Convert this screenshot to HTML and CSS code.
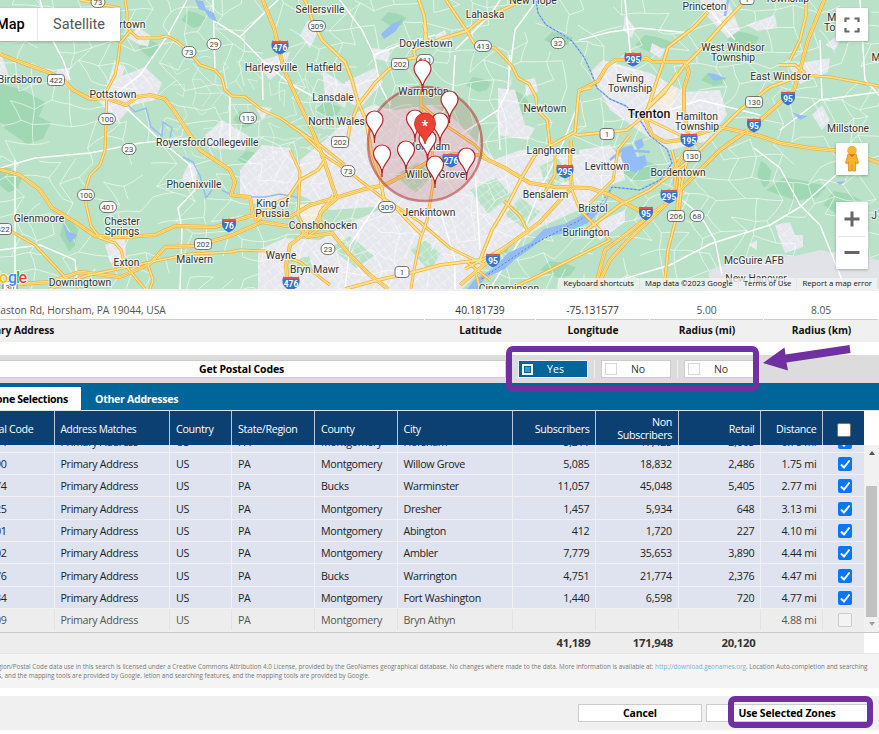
FILE: index.html
```html
<!DOCTYPE html>
<html lang="en">
<head>
<meta charset="utf-8">
<title>Zone Selections</title>
<link rel="stylesheet" href="styles.css">
</head>
<body>
<div class="app">
  <section class="map">
    <svg class="map-canvas" id="map" viewBox="0 0 879 289" width="879" height="289"></svg>
    <div class="map-type"><b>Map</b><span>Satellite</span></div>
    <button class="ctl fullscreen" aria-label="Fullscreen"><svg width="16" height="16" viewBox="0 0 16 16"><path d="M1.500 5V1.500h4M10.500 1.500h4V5M14.500 11v3.500h-4M5.500 14.500h-4V11" fill="none" stroke="#666" stroke-width="2.200"/></svg></button>
    <button class="ctl pegman" aria-label="Street View"><svg width="18" height="28" viewBox="0 0 18 28"><path d="M5 9h8l2.500 9-2 .8-1-2V26H9.600v-6H8.400v6H5.500v-9.200l-1 2-2-.8z" fill="#f9b32a" stroke="#d98b1c" stroke-width=".8"/><circle cx="9" cy="5.500" r="4.300" fill="#fbb829" stroke="#d98b1c" stroke-width=".6"/><path d="M6 9.500h6l-3 2.500z" fill="#e3622c"/></svg></button>
    <div class="ctl zoom"><button aria-label="Zoom in"><svg width="16" height="16"><path d="M8 .5v15M.5 8h15" stroke="#666" stroke-width="3"/></svg></button><button aria-label="Zoom out"><svg width="16" height="16"><path d="M.5 7.500h15" stroke="#666" stroke-width="3"/></svg></button></div>
    <div class="legal"><span>Keyboard shortcuts</span><span>Map data ©2023 Google</span><span>Terms of Use</span><span>Report a map error</span></div>
  </section>

  <section class="location">
    <div class="field address"><span>100 Easton Rd, Horsham, PA 19044, USA</span><b>Primary Address</b></div>
    <div class="field"><span class="dark">40.181739</span><b>Latitude</b></div>
    <div class="field"><span class="dark">-75.131577</span><b>Longitude</b></div>
    <div class="field"><span>5.00</span><b>Radius (mi)</b></div>
    <div class="field"><span>8.05</span><b>Radius (km)</b></div>
  </section>

  <section class="toolbar">
    <button class="get">Get Postal Codes</button>
    <div class="toggles">
      <button class="toggle on"><i></i><span>Yes</span></button><em></em>
      <button class="toggle"><i></i><span>No</span></button><em></em>
      <button class="toggle"><i></i><span>No</span></button>
    </div>
  </section>

  <nav class="tabs"><div class="tab active">Zone Selections</div><div class="tab">Other Addresses</div></nav>

  <section class="grid">
    <div class="row head"><div>Postal Code</div><div class="tight">Address Matches</div><div>Country</div><div>State/Region</div><div>County</div><div>City</div><div class="n">Subscribers</div><div class="n">Non<br>Subscribers</div><div class="n">Retail</div><div class="n">Distance</div><div class="c"><i class="box"></i></div></div>
    <div class="body">
      <div class="rows" id="rows"></div>
      <div class="scroll"><i class="up"></i><i class="thumb"></i><i class="down"></i></div>
    </div>
    <div class="row total"><div></div><div></div><div></div><div></div><div></div><div></div><div class="n">41,189</div><div class="n">171,948</div><div class="n">20,120</div><div></div><div></div></div>
  </section>

  <footer class="notice"><p>Region/Postal Code data use in this search is licensed under a Creative Commons Attribution 4.0 License, provided by the GeoNames geographical database. No changes where made to the data. More information is available at: <a>http://download.geonames.org</a>. Location Auto-completion and searching</p><p>features, and the mapping tools are provided by Google. letion and searching features, and the mapping tools are provided by Google.</p></footer>
  <section class="actions"><button>Cancel</button><button class="use">Use Selected Zones</button></section>

  <div class="callout first"></div>
  <div class="callout second"></div>
  <svg class="arrow" width="92" height="30" viewBox="0 0 92 30"><path d="M3 18 24.500 2.500 25.500 9.500 89.500 0 90.500 8 26.500 17.500 28 25.500z" fill="#7030a0"/></svg>
</div>
<script src="app.js"></script>
</body>
</html>
```
FILE: styles.css
```css
* { box-sizing: border-box; }
body { margin: 0; background: #fff; font: 11px/14px "Open Sans", "Noto Sans", sans-serif; color: #222; }
button { font: inherit; padding: 0; border: 0; margin: 0; background: #fff; }
.app { position: relative; width: 879px; height: 734px; overflow: hidden; }

.map { position: relative; height: 291px; border-bottom: 2px solid #f0f0f0; overflow: hidden; }
.map-canvas { display: block; }
.map-canvas text { font-family: Roboto, sans-serif; }
.label { font-size: 10.3px; fill: #333; stroke: #fff; stroke-opacity: .7; stroke-width: 2px; paint-order: stroke; text-anchor: middle; }
.label.big { font-size: 12.3px; font-weight: 500; fill: #111; }
.shield { font-size: 7.800px; fill: #444; text-anchor: middle; }
.shield.inter { fill: #fff; font-weight: 700; font-size: 8.300px; }
.logo { font-size: 16px; font-weight: 500; paint-order: stroke; stroke: #fff; stroke-width: 1.500px; }
.map-type { position: absolute; left: -20px; top: 8px; height: 33px; display: flex; background: #fff; box-shadow: 0 1px 3px #0004; font: 14.5px/33px Roboto, sans-serif; }
.map-type b { width: 58px; padding-left: 16px; font-weight: 500; color: #000; border-right: 1px solid #e6e6e6; }
.map-type span { width: 82px; text-align: center; color: #565656; }
.ctl { position: absolute; left: 836px; width: 32px; background: #fff; border-radius: 1px; box-shadow: 0 1px 3px #0004; display: flex; align-items: center; justify-content: center; }
.fullscreen { top: 8px; height: 33px; }
.pegman { top: 143px; height: 32px; }
.zoom { top: 202px; height: 67px; flex-direction: column; }
.zoom button { width: 28px; height: 33px; display: grid; place-items: center; }
.zoom button + button { border-top: 1px solid #e6e6e6; }
.legal { position: absolute; right: 2px; bottom: 0; height: 11px; display: flex; background: #f5f5f5b8; font: 7.750px/11px "Open Sans", sans-serif; color: #111; white-space: nowrap; }
.legal span { padding: 0 5px; border-right: 1px solid #dddddd80; }
.legal span:last-child { border: 0; }

.location { display: grid; grid-template-columns: 424px 110px 113px 113px 114px; gap: 1px; height: 64px; padding-top: 11px; width: 879px; }
.field { text-align: center; height: 41px; }
.field span { display: block; height: 18px; line-height: 17px; color: #555; font-size: 10.300px; letter-spacing: -.05px; border-bottom: 1px solid #ccc; }
.field .dark { color: #333; }
.field b { display: block; height: 22px; line-height: 20px; background: #f0f0f0; color: #111; font-size: 10.200px; letter-spacing: -.05px; margin-right: -1px; }
.address { display: flex; flex-direction: column; margin-left: -60px; text-align: left; }
.address span { padding-left: 34.500px; }
.address b { padding-left: 31px; }

.toolbar { display: flex; height: 28px; background: #dcdcdc; padding-top: 5px; }
.get { width: 526px; margin-left: -20px; height: 18px; border: 1px solid #ccc; font-weight: 700; font-size: 10.500px; letter-spacing: -.15px; color: #000; line-height: 16px; padding-right: 3px; }
.toggles { display: flex; margin-left: 12px; gap: 6px; }
.toggles em { width: 1px; height: 18px; background: #eee; }
.toggle { display: flex; align-items: center; width: 70px; height: 18px; border: 1px solid #ccc; color: #333; padding-left: 3px; font-size: 10.500px; }
.toggle i { flex: none; width: 12px; height: 12px; border: 1px solid #d8d8d8; }
.toggle span { flex: 1; text-align: center; padding-right: 11px; }
.toggle.on { background: #00669a; color: #fff; border-color: #eee; }
.toggle.on i { width: 11px; height: 11px; background: #2e9edb; border: 2px solid #fff; box-shadow: inset 0 0 0 1px #00669a; }
.toggle.on span { padding-right: 9px; }

.tabs { display: flex; height: 28px; background: #00669a; padding-top: 4px; border-bottom: 1px solid #dce5ec; }
.tab { height: 23px; line-height: 24px; font-weight: 700; font-size: 10.600px; letter-spacing: -.3px; color: #fff; padding-left: 14px; }
.tab.active { width: 96px; margin-left: -15px; background: #fff; color: #000; padding: 0 13px 0 0; white-space: nowrap; display: flex; justify-content: flex-end; }

.row { display: grid; grid-template-columns: 54.500px 115.500px 62px 83px 82.500px 115.500px 83px 82.500px 82.500px 62px 41px; width: 864px; letter-spacing: -.32px; }
.row > div { display: flex; align-items: center; padding: 0 5.500px 0 6px; border-right: 1px solid #f1f1f1; white-space: nowrap; overflow: hidden; }
.row > .n { justify-content: flex-end; text-align: right; letter-spacing: -.2px; }
.row > .c { justify-content: center; border-right: 0; padding: 0 0 0 3px; }
.row > div:first-child { justify-content: flex-end; padding-right: 47px; }
.head { height: 34px; background: #0c4072; color: #fff; line-height: 13px; font-size: 10.700px; }
.head > div:first-child { padding-right: 20px; }
.head > div { border-color: #b9c8d8; padding-top: 2px; }
.head > .n { letter-spacing: -.32px; }
.head > .c { padding-top: 3px; padding-left: 1px; }
.head .tight { font-size: 10.100px; }
.body { display: flex; height: 188px; border-bottom: 1px solid #c9c9c9; }
.rows { width: 864px; height: 187px; overflow: hidden; display: flex; flex-direction: column; justify-content: flex-end; background: #ededed; }
.rows .row { flex: none; height: 22.330px; background: #dfe3ef; border-bottom: 1px solid #f1f1f1; font-size: 10.700px; }
.rows .row > div { padding-top: 1px; }
.rows .row.off { height: 23px; background: #ededed; color: #555; border: 0; padding-bottom: 2px; }
.rows .row.off > div { border-color: #e2e2e2; }
.box { width: 14px; height: 14px; border-radius: 2px; background: #fff; border: 1px solid #777; display: block; }
.box.on { background: #0877f7; border: 0; }
.box svg { display: block; }
.off .box { background: #f3f3f3; border-color: #ccc; }
.scroll { width: 15px; display: flex; flex-direction: column; align-items: center; background: #f1f1f1; padding-top: 6px; }
.up { border: 3px solid transparent; border-top: 0; border-bottom: 4px solid #505050; }
.thumb { width: 11px; height: 131px; margin-top: 31px; background: #c1c1c1; }
.down { margin-top: 5px; border: 3px solid transparent; border-bottom: 0; border-top: 4px solid #a0a0a0; }
.total { height: 20px; background: #ededed; font-weight: 700; font-size: 11.300px; color: #333; }
.total > div { border: 0; }
.total > .n { letter-spacing: -.25px; }

.notice { height: 35px; background: #f4f4f4; border-top: 1px solid #e6e6e6; padding-top: 8px; font-size: 6.290px; line-height: 9.300px; color: #777; white-space: nowrap; }
.notice p { margin: 0; width: 895px; display: flex; white-space: pre; }
.notice p:first-child { margin-left: -9.500px; }
.notice p:last-child { margin-left: -23px; }
.notice a { color: #6db6dc; }
.actions { margin-top: 8px; height: 34px; background: #f0f0f0; display: flex; gap: 4px; padding: 8px 0 0 578px; }
.actions button { width: 124px; height: 18px; border: 1px solid #ccc; color: #000; font-weight: 700; font-size: 10.500px; letter-spacing: -.15px; line-height: 17px; }
.actions .use { width: 162px; }

.callout { position: absolute; border: 6px solid #7030a0; border-radius: 7px; }
.first { left: 506px; top: 346px; width: 253px; height: 46px; }
.second { left: 728px; top: 696px; width: 145px; height: 32px; }
.arrow { position: absolute; left: 760px; top: 345px; }
```
FILE: app.js
```js
const map = document.getElementById('map');
const out = [];
const add = s => out.push(s);

// Repeatable pseudo-random numbers so the street mesh is stable.
let seed = 41;
const rnd = () => (seed = (seed * 16807) % 2147483647) / 2147483647;

add('<rect width="879" height="289" fill="#bae2c8"/>');

const woods = [[18,110,34,26],[30,128,26,18],[195,20,14,9],[245,120,12,9],[150,48,12,10],[255,160,18,9],[60,20,18,10],[330,110,14,8],[520,105,10,14],[655,45,20,10],[745,40,18,9],[800,190,34,12],[845,205,22,14],[640,170,22,14],[455,175,18,10],[500,245,14,12],[560,270,20,9],[350,250,14,9],[290,180,22,10],[395,20,14,8],[560,40,16,8],[765,175,8,14],[10,180,16,14],[70,235,10,18],[480,85,14,8],[715,80,14,7]];
woods.forEach(([x,y,w,h]) => add(`<path d="M${x-w} ${y}l${w*.5} ${-h}l${w*.6} ${h*.2}l${w*.7} ${h*.5}l${-w*.3} ${h*.9}l${-w*.6} ${h*.3}z" fill="#a0d8b3"/>`));

const towns = [
  '105,90 115,60 125,68 122,76 145,67 162,83 155,100 133,105 118,122 90,92',
  '128,38 138,27 151,36 148,46 140,45', '0,50 6,68 10,80 0,84', '58,70 70,68 68,85 50,82',
  '262,60 290,52 284,68 270,80 262,70', '205,135 222,120 250,137 245,150 212,148', '255,106 272,108 262,120',
  '308,20 318,32 310,48 300,35', '345,82 375,68 383,82 360,108 345,100', '372,48 390,50 388,62 373,58',
  '322,70 350,88 345,108 325,95', '435,35 445,30 448,42 438,44', '240,170 262,145 290,148 300,175 288,205 262,208 240,195',
  '183,175 190,162 198,168 195,186 182,184', '105,245 125,238 126,263 110,262', '258,250 285,238 320,240 345,225 390,205 420,190 480,165 520,150 560,150 600,160 610,185 590,205 545,225 500,252 462,289 258,289',
  '300,160 325,140 352,115 372,105 395,110 430,105 450,115 480,145 500,165 470,195 400,205 330,210 300,195',
  '498,88 515,90 525,125 535,128 528,140 498,135', '525,80 535,78 538,92 526,96',
  '590,72 603,60 650,73 685,92 720,90 727,115 705,142 670,150 645,135 610,110', '579,150 610,145 622,160 625,180 600,188 579,182',
  '625,15 635,28 632,38 623,30', '652,43 665,50 660,58 650,52', '700,0 728,0 740,30 728,38 706,15', '746,25 775,15 777,27 758,31',
  '822,105 830,120 822,130 812,115', '825,45 845,30 835,50', '775,225 790,222 795,235 803,235 803,247 785,253 778,235',
  '748,245 757,240 757,250', '788,65 830,58 828,72 800,84', '590,225 625,210 625,222 600,240'
];
add(`<g fill="#e7e8ed">${towns.map(p => `<polygon points="${p}"/>`).join('')}</g>`);
add('<g fill="#bae2c8"><path d="M330 248l20-12 24 20-18 12zM410 250l16-10 14 14-10 18zM470 190l26-12 16 18-24 18zM540 166l18-8 12 22-24 10zM395 175l22-12 18 12-20 18zM505 215l15-18 20 15-16 16zM285 262l24-6 4 14-28 4z"/></g>');
add('<path d="M665 90l12-2 -4 18-10 12-4-14z" fill="#f5ecdd"/><path d="M298 205l24-4-3 20-16 3z" fill="#f5ecdd"/>');

// Local streets: a jittered lattice, finer where it covers built-up land.
function mesh(step, x0, y0, x1, y1, keep, width, opacity, tilt) {
  const nx = Math.ceil((x1-x0)/step)+1, ny = Math.ceil((y1-y0)/step)+1, pts = [];
  for (let j=0;j<ny;j++) { pts[j]=[]; for (let i=0;i<nx;i++) pts[j][i]=[x0+i*step+(rnd()-.5)*step*.7+(j%2)*step*tilt, y0+j*step+(rnd()-.5)*step*.7]; }
  let d='';
  const seg=(a,b)=>{ if(rnd()<keep){ const mx=(a[0]+b[0])/2+(rnd()-.5)*step*.25,my=(a[1]+b[1])/2+(rnd()-.5)*step*.25; d+=`M${a[0].toFixed(1)} ${a[1].toFixed(1)}Q${mx.toFixed(1)} ${my.toFixed(1)} ${b[0].toFixed(1)} ${b[1].toFixed(1)}`; } };
  for (let j=0;j<ny;j++) for (let i=0;i<nx;i++) { if(i+1<nx) seg(pts[j][i],pts[j][i+1]); if(j+1<ny) seg(pts[j][i],pts[j+1][i]); }
  add(`<path d="${d}" fill="none" stroke="#fff" stroke-width="${width}" opacity="${opacity}"/>`);
}
mesh(19,-10,-10,890,300,.62,.8,.72,.5);
mesh(11,170,60,320,150,.42,.6,.7,.5);
add(`<defs><clipPath id="urban">${towns.map(p => `<polygon points="${p}"/>`).join('')}</clipPath><pattern id="streets" width="13" height="9" patternUnits="userSpaceOnUse" patternTransform="rotate(-38)"><path d="M0 0H13M0 0V9M6 0V5" stroke="#fff" stroke-width="1" fill="none"/></pattern></defs>`);
add('<rect width="879" height="289" fill="url(#streets)" clip-path="url(#urban)" opacity=".6"/>');
add('<polygon points="709,270 750,257 795,256 820,250 879,260 879,289 708,289" fill="#e1e3e8"/>');

const white = [
  'M187 0 168 35 140 75 118 92','M40 0 50 35 63 60 70 80','M213 0 215 70 M213 20 240 37 262 60 290 84 320 100','M240 37 265 12 278 0',
  'M230 95 230 150','M262 60 263 100','M0 168 35 158 90 153 140 143 190 138','M125 107 160 140 190 165 195 190',
  'M195 190 178 208 182 230 180 289','M0 250 40 245 75 260 78 289','M15 160 15 289','M340 0 362 30 374 55 380 85 390 105','M374 55 400 45 435 35',
  'M490 289 520 240 540 190 560 150 580 100','M455 55 453 90 440 120','M455 50 490 15 500 0','M510 55 508 90 498 110 500 150','M498 110 460 135',
  'M537 0 515 30 510 70','M625 0 630 50 633 65','M710 10 735 40','M754 148 780 168 800 205 820 225 842 280',
  'M836 175 800 207 770 225 710 244 670 265 620 280','M682 200 700 215 715 240 722 275','M579 40 610 32 640 28 690 33','M640 120 700 100 760 115',
  'M820 40 822 100 M860 0 865 80 879 95','M780 130 820 100 879 92','M440 210 455 260 455 289','M380 200 350 245 345 289','M480 130 475 170 480 250'
];
add(`<g fill="none" stroke="#fff" stroke-width="1.5" stroke-linejoin="round">${white.map(d=>`<path d="${d}"/>`).join('')}</g>`);

add('<g fill="#94bdf7"><path d="M467 289 474 280 494 268 508 253 530 243 544 229 564 224 582 215 594 206 600 211 588 223 565 233 546 237 530 249 514 260 505 269 485 278 478 289z"/><path d="M381 34 392 24 403 19 396 31 384 39z"/><path d="M195 0 203 1 206 9 214 13 217 22 209 18 205 11 199 9z"/><path d="M63 222 67 231 77 235 70 243 67 239z"/><path d="M622 148l10-3 5 12 8-2 2 10-12 8-10-6-4-10z"/><path d="M707 73l8 1 11 5-12 2z"/><path d="M792 112l8 3 8 1-8 4z"/><path d="M836 182l10-1-6 4z"/><path d="M634 142l8-4 2 8-6 4z"/></g>');
add('<g fill="none" stroke="#94bdf7" stroke-width="1.5"><path d="M536 0 538 13 546 25 560 33 572 41 584 57 591 72 597 88 610 99 626 106 640 120 650 136 667 149 672 163 660 180 640 190 612 187 605 203 594 210"/><path d="M128 105 135 112 146 108 151 127 162 136 163 122 172 128 170 138"/><path d="M183 157 193 162 200 176 206 198 212 190M222 190 235 197 265 197 280 194 300 198"/><path d="M728 0 725 16M610 160 622 150 650 152" stroke-width="2.5"/></g>');
add('<path d="M536 0 538 13 546 25 560 33 572 41 584 57 591 72 597 88 610 99 626 106 640 120 650 136 667 149 672 163 660 180 640 190 612 187 600 205 580 220 530 246 480 280" fill="none" stroke="#5378bd" stroke-width=".9" stroke-dasharray="2 2"/>');

const roads = [
  [2,'80 0 95 3 104 5 120 8'],[2,'125 0 127 12 127 22 130 31 138 38 158 38 167 36 178 42 189 52 200 65 215 70 222 78 225 90 232 96 245 97 262 110 280 118 300 132 325 156 348 171 380 196 420 222 450 248 485 265'],
  [2,'130 31 120 43 118 60 115 75 107 90 106 120 105 150 100 165 90 175 86 188 86 204 91 226 100 238 115 243 121 250 125 265 140 283 145 289'],
  [3,'0 54 20 62 45 71 62 78 73 90 90 99 106 98 126 105 137 97 150 95 165 99 175 112 190 135 200 150 215 160 230 170 235 182 231 195 250 197 253 215 257 221'],
  [3,'262 -2 274 28 284 70 300 105 312 130 321 152 334 190 337 198 322 211 315 225 290 245 286 265 288 289'],
  [3,'-2 169 20 175 40 190 52 208 75 222 95 236 125 237 155 235 175 226 215 227 250 216 280 216 290 217 310 205 335 198 365 189 385 185 412 171 430 161 455 154 478 155 505 168 530 183 555 187 590 188 610 195 640 211 660 212'],
  [3,'20 284 50 282 80 272 120 277 150 264 165 247 195 246 230 236 262 222 300 228 307 237 332 233 350 255 370 275 388 289'],
  [2,'0 225 35 245 65 277 80 289'],[2,'50 289 85 276 160 260 190 254 230 252 240 250 265 251 300 262 330 285'],[2,'148 265 153 280 150 289'],
  [2.500,'257 221 275 203 288 198 300 180 318 170 325 160'],[2,'307 237 320 228 320 212 330 200 333 195'],[2,'290 150 300 172 298 215 308 235'],
  [2.500,'305 0 313 22 322 40 345 62 352 80 358 102 366 120 371 150 380 178 384 200 396 208 409 222 421 234'],
  [2,'290 125 320 145 345 165'],
  [2.500,'418 -2 424 15 426 30 424 45 414 50 415 57 426 60'],[2.500,'424 25 428 45 440 39 467 31 480 20 500 11 515 4 525 0'],
  [2.500,'424 56 402 60 388 70 375 83 358 105 350 125 347 145'],[2,'424 60 421 85 421 110 432 145 433 185 427 220 420 240 414 270 411 289'],
  [2,'421 105 445 125 475 145 490 162'],[2.200,'446 0 458 18 467 31 475 45 495 48 512 66 518 78 529 84 536 97 537 110 547 120 550 145'],
  [2.500,'591 88 579 90 577 110 575 132 557 142 535 155 522 177 510 200 492 230 480 260 440 265 414 272 378 280 345 289'],
  [3,'571 140 570 165 572 188 560 200 540 222 515 240 490 260 460 285'],
  [3,'579 91 598 81 607 66 615 60 638 60 647 58 652 62 685 62 689 72 684 88 684 112 690 145 674 170 676 190 664 205 653 213 620 239 605 250 595 289'],
  [2.500,'708 12 693 28 680 38 668 47 663 63 657 80 648 108'],[2.500,'748 -2 725 22 700 50 685 65 674 80 650 105 643 117 627 130 579 135 575 134'],
  [2.200,'646 110 665 92 677 73'],[3,'825 -2 808 40 800 70 794 90 785 98 755 125 720 150 690 180 655 215 630 238 610 260 596 289'],
  [2.200,'806 0 806 15 800 40 790 60'],[2.500,'779 65 795 65 804 72 798 77 770 87 740 110 725 125 690 160 650 190 620 205 600 220 580 235'],
  [3,'645 118 652 135 665 142 680 140 720 127 760 136 780 143 810 148 850 152 879 163'],[2,'645 118 680 135 700 145'],
  [2,'800 75 830 77 879 86'],[2.200,'672 150 680 180 676 218 668 250 664 289'],[2.200,'690 147 682 183 678 220'],
  [2,'630 135 618 150 613 180 590 203'],[2,'555 150 555 175 540 200'],[2.200,'504 201 520 216 528 232 500 250 465 269'],[2.200,'571 188 580 210 610 240 590 250 540 275 510 289'],
  [2,'475 270 480 289M467 262 490 280']
];
const path = p => 'M'+p;
add(`<g fill="none" stroke="#f3b03a" stroke-linejoin="round">${roads.map(([w,p])=>`<path d="${path(p)}" stroke-width="${w+1}"/>`).join('')}</g>`);
add(`<g fill="none" stroke="#ffe38f" stroke-linejoin="round">${roads.map(([w,p])=>`<path d="${path(p)}" stroke-width="${w-.6}"/>`).join('')}</g>`);
add(`<g fill="none" stroke="#f6b93f" stroke-width=".7">${roads.filter(r=>r[0]>=3).map(([w,p])=>`<path d="${path(p)}"/>`).join('')}</g>`);

add('<circle cx="425" cy="144" r="57" fill="#a33" fill-opacity=".17" stroke="#b5302c" stroke-opacity=".55" stroke-width="2.400"/>');

const labels = [['Sellersville',320,12.500],['Lahaska',485,18],['New Hope',533,4],['Princeton',704.5,10],['Township',787,2],['Doylestown',426,47],['Boyertown',121,28],['Harleysville',271,71],['Hatfield',324,71],['Birdsboro',20,82.500],['Pottstown',113,98],['Lansdale',333,101],['North Wales',336.500,125],['Warrington',423.500,95],['Newtown',545,111.500],['Royersford',181,146],['Collegeville',232.500,145.500],['Phoenixville',194,188],['West Windsor',733,51],['Township',733,61],['East Windsor',780.500,80],['Ewing',630,82],['Township',630,92],['Hamilton',697,120],['Township',697,130],['Millstone',848,132],['Langhorne',551,153.500],['Levittown',607,169.500],['Bordentown',678,176],['Bensalem',545.500,197.500],['Bristol',593,212],['Burlington',586,235.500],['Glenmoore',39,221.500],['Chester',122,225],['Springs',122,235],['King of',272.500,206.500],['Prussia',272.500,216.500],['Conshohocken',323,229],['Malvern',194.500,263],['Exton',126.500,265.500],['Wayne',281,258.500],['Bryn Mawr',314.500,273],['Downingtown',80,286],['Jenkintown',429,215.500],['Horsham',429,150],['Willow Grove',435.500,178],['McGuire AFB',754,263.500],['New Hanover',756,282],['Cinnaminson',509,292],['Monroe',845,21],['Township',846,31],['J',874,219],['M',876,61]];
labels.forEach(([n,x,y]) => add(`<text class="label" x="${x}" y="${y}">${n}</text>`));
add('<text class="label big" x="649" y="118">Trenton</text>');

// Route shields: state (oval), US (square), interstate (blue).
const shields = [['s',98,2,'73'],['s',189,52,'73'],['s',214,44,'29'],['u',56,80,'422'],['s',107,119,'100'],['s',248,118,'113'],['s',129,149,'23'],['s',86,195,'100'],['s',108,207,'401'],['u',3,229,'422'],['u',203,244,'202'],['s',328,249,'23'],['s',348,171,'73'],['s',387,207,'309'],['s',317,26,'309'],['u',400,64,'202'],['u',340,142,'202'],['s',483,46,'413'],['s',425,60,'611'],['s',558,43,'32'],['u',402,272,'1'],['u',607,134,'1'],['u',747,-1,'1'],['u',754,102,'130'],['u',692,156,'130'],['u',676,216,'206'],['s',697,216,'68'],['i',280,47,'476'],['i',229,225,'76'],['i',291,283,'476'],['i',451,160,'276'],['i',493,260,'95'],['i',565,171,'295'],['i',633,59,'295'],['i',689,140,'195'],['i',754,125,'95'],['i',788,98,'95'],['i',669,196,'295'],['i',646,213,'95'],['u',10,287,'30']];
shields.forEach(([t,x,y,n]) => {
  const w = n.length===3 ? 17 : 14;
  const h = w/2;
  if (t==='i') add(`<path d="M${x-h+.5} ${y-6}H${x+h-.5}C${x+h+1.500} ${y+2} ${x+h-2} ${y+5} ${x} ${y+7.500}C${x-h+2} ${y+5} ${x-h-1.500} ${y+2} ${x-h+.5} ${y-6}z" fill="#3474cc"/><path d="M${x-h+.5} ${y-6.500}Q${x-h/2} ${y-5} ${x} ${y-6.500}Q${x+h/2} ${y-5} ${x+h-.5} ${y-6.500}V${y-4}H${x-h+.5}z" fill="#dc5550"/><text class="shield inter" x="${x}" y="${y+3.500}">${n}</text>`);
  else add(`<rect x="${x-h}" y="${y-5.500}" width="${w}" height="11" rx="${t==='s'?5.500:3}" fill="#fff" stroke="#666" stroke-width=".9"/><text class="shield" x="${x}" y="${y+2.800}">${n}</text>`);
});

const pin = (x,y) => add(`<path d="M${x} ${y+28}C${x-.8} ${y+18} ${x-8.500} ${y+16} ${x-8.500} ${y+8.500}A8.500 8.500 0 0 1 ${x+8.500} ${y+8.500}C${x+8.500} ${y+16} ${x+.8} ${y+18} ${x} ${y+28}z" fill="#fff" stroke="#b3262a" stroke-width="1.200"/><path d="M${x} ${y+24}v8" stroke="#b3262a" stroke-width="1.300"/>`);
[[422.500,60],[449.500,91],[374.500,111],[415,110],[440,113],[427.500,130],[382,145],[406,141],[466.500,148],[435,156]].forEach(p => pin(...p));
add('<path d="M425 144C423.500 136 414.500 132 414.500 123.500A10.500 10.500 0 0 1 435.500 123.500C435.500 132 426.500 136 425 144z" fill="#ea4335" stroke="#c5221f" stroke-width=".8"/><text x="425" y="131" text-anchor="middle" fill="#fff" font-size="14" font-weight="700">*</text>');
add('<text class="logo" x="-20" y="283"><tspan fill="#4285f4">G</tspan><tspan fill="#ea4335" x="-9">o</tspan><tspan fill="#fbbc04" x="-1">o</tspan><tspan fill="#4285f4" x="8">g</tspan><tspan fill="#34a853" x="16">l</tspan><tspan fill="#ea4335" x="18.500">e</tspan></text>');
map.innerHTML = out.join('');

const data = [
  ['19044','Montgomery','Horsham','5,211','17,425','2,605','0.78 mi'],
  ['19090','Montgomery','Willow Grove','5,085','18,832','2,486','1.75 mi'],
  ['18974','Bucks','Warminster','11,057','45,048','5,405','2.77 mi'],
  ['19025','Montgomery','Dresher','1,457','5,934','648','3.13 mi'],
  ['19001','Montgomery','Abington','412','1,720','227','4.10 mi'],
  ['19002','Montgomery','Ambler','7,779','35,653','3,890','4.44 mi'],
  ['18976','Bucks','Warrington','4,751','21,774','2,376','4.47 mi'],
  ['19034','Montgomery','Fort Washington','1,440','6,598','720','4.77 mi'],
  ['19009','Montgomery','Bryn Athyn','','','','4.88 mi']
];
const tick = '<svg width="14" height="14"><path d="M3 7.500 6 10.500 11.500 3.500" fill="none" stroke="#fff" stroke-width="2"/></svg>';
document.getElementById('rows').innerHTML = data.map(([zip,county,city,a,b,c,d]) =>
  `<div class="row${a ? '' : ' off'}"><div>${zip}</div><div>Primary Address</div><div>US</div><div>PA</div><div>${county}</div><div>${city}</div><div class="n">${a}</div><div class="n">${b}</div><div class="n">${c}</div><div class="n">${d}</div><div class="c"><i class="box${a ? ' on' : ''}">${a ? tick : ''}</i></div></div>`).join('');
```
